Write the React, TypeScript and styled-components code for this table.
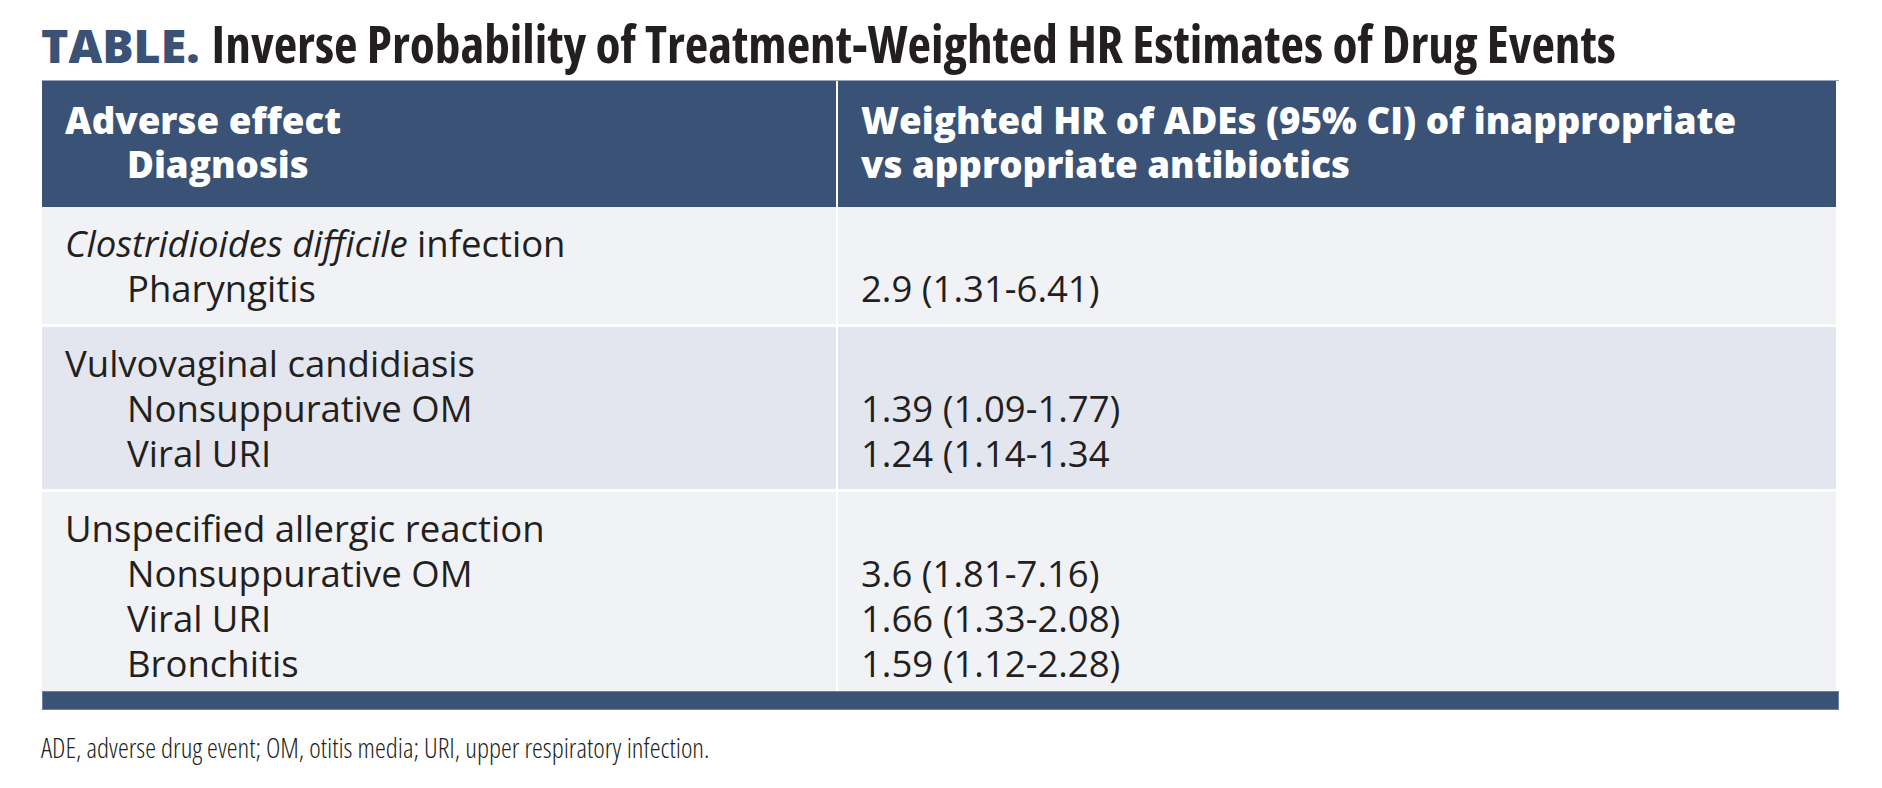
import styled, { createGlobalStyle } from "styled-components";

const GlobalStyle = createGlobalStyle`
  body {
    margin: 0;
    background: #ffffff;
    font-family: "Open Sans", "DejaVu Sans", sans-serif;
    color: #231f20;
  }
`;

const NAVY = "#3a5276";

const Page = styled.div`
  padding: 15px 0 0 42px;
  width: 1797px;
`;

const Title = styled.h1`
  margin: 0 0 9px -1px;
  height: 56px;
  font-size: 51.3px;
  line-height: 56px;
  font-weight: 700;
  font-stretch: 75%;
  color: #231f20;
  white-space: nowrap;
`;

const Label = styled.span`
  color: ${NAVY};
  font-size: 46.5px;
  line-height: 1;
  font-stretch: 100%;
  font-weight: 800;
  margin-right: 12px;
`;

const Body = styled.div`
  display: flex;
  flex-direction: column;
  gap: 3px;
  background: #ffffff;
  width: 1794px;
`;

interface RowProps {
  head?: boolean;
}

const Row = styled.div<RowProps>`
  display: grid;
  grid-template-columns: 794px 998px;
  column-gap: 2px;
  background: #ffffff;
  border-top: ${(p) => (p.head ? "1px solid #9aa6b8" : "none")};
`;

interface CellProps {
  tone: "head" | "light" | "dark";
  bottom?: number;
}

const Cell = styled.div<CellProps>`
  background: ${(p) =>
    p.tone === "head" ? NAVY : p.tone === "dark" ? "#e3e6ee" : "#f1f2f6"};
  color: ${(p) => (p.tone === "head" ? "#ffffff" : "#231f20")};
  font-size: ${(p) => (p.tone === "head" ? "36.7px" : "36.5px")};
  font-weight: ${(p) => (p.tone === "head" ? 800 : 400)};
  line-height: ${(p) => (p.tone === "head" ? "44px" : "45px")};
  padding: ${(p) =>
    p.tone === "head" ? "17px 0 21px 23px" : `14px 0 ${p.bottom ?? 13}px 23px`};
`;

interface LineProps {
  sub?: boolean;
}

const Line = styled.div<LineProps>`
  padding-left: ${(p) => (p.sub ? "62px" : "0")};
  white-space: nowrap;
`;

const Em = styled.i`
  font-style: italic;
`;

const BottomBar = styled.div`
  height: 17px;
  width: 1795px;
  background: ${NAVY};
  border: 1px solid #6d819c;
`;

const Footnote = styled.p`
  margin: 21px 0 0 -1px;
  font-size: 27.4px;
  line-height: 34px;
  font-weight: 300;
  font-stretch: 75%;
  color: #231f20;
`;

interface Group {
  effect: React.ReactNode;
  items: { dx: string; hr: string }[];
}

const groups: Group[] = [
  {
    effect: (
      <>
        <Em>Clostridioides difficile</Em> infection
      </>
    ),
    items: [{ dx: "Pharyngitis", hr: "2.9 (1.31-6.41)" }],
  },
  {
    effect: "Vulvovaginal candidiasis",
    items: [
      { dx: "Nonsuppurative OM", hr: "1.39 (1.09-1.77)" },
      { dx: "Viral URI", hr: "1.24 (1.14-1.34" },
    ],
  },
  {
    effect: "Unspecified allergic reaction",
    items: [
      { dx: "Nonsuppurative OM", hr: "3.6 (1.81-7.16)" },
      { dx: "Viral URI", hr: "1.66 (1.33-2.08)" },
      { dx: "Bronchitis", hr: "1.59 (1.12-2.28)" },
    ],
  },
];

export default function App() {
  return (
    <>
      <GlobalStyle />
      <Page>
        <Title>
          <Label>TABLE.</Label>Inverse Probability of Treatment-Weighted HR
          Estimates of Drug Events
        </Title>
        <Row head>
          <Cell tone="head">
            <Line>Adverse effect</Line>
            <Line sub>Diagnosis</Line>
          </Cell>
          <Cell tone="head">
            <Line>Weighted HR of ADEs (95% CI) of inappropriate</Line>
            <Line>vs appropriate antibiotics</Line>
          </Cell>
        </Row>
        <Body>
          {groups.map((g, i) => {
            const tone = i % 2 === 1 ? "dark" : "light";
            const bottom = i === groups.length - 1 ? 5 : 13;
            return (
              <Row key={i}>
                <Cell tone={tone} bottom={bottom}>
                  <Line>{g.effect}</Line>
                  {g.items.map((it) => (
                    <Line sub key={it.dx}>
                      {it.dx}
                    </Line>
                  ))}
                </Cell>
                <Cell tone={tone} bottom={bottom}>
                  <Line>&nbsp;</Line>
                  {g.items.map((it) => (
                    <Line key={it.dx}>{it.hr}</Line>
                  ))}
                </Cell>
              </Row>
            );
          })}
        </Body>
        <BottomBar />
        <Footnote>
          ADE, adverse drug event; OM, otitis media; URI, upper respiratory
          infection.
        </Footnote>
      </Page>
    </>
  );
}
